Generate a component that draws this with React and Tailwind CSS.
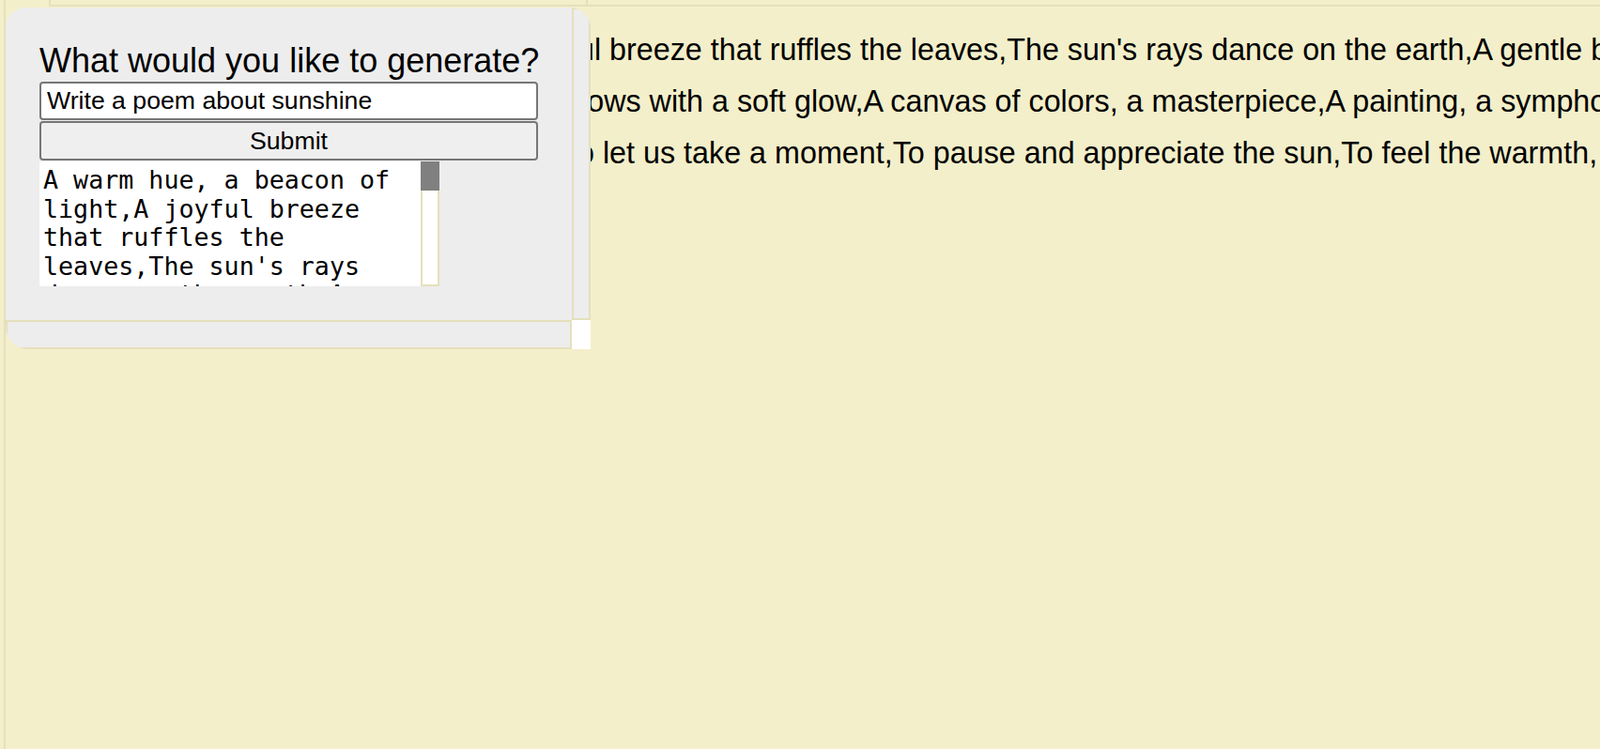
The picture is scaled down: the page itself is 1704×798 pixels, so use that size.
import React from 'react';

const poem =
  "A warm hue, a beacon of light,A joyful breeze that ruffles the leaves,The sun's rays dance on the earth,A gentle breeze whispers through the trees,The sky glows with a soft glow,A canvas of colors, a masterpiece,A painting, a symphony of light,So let us take a moment,To pause and appreciate the sun,To feel the warmth, to bask in its light.";

// visible tail of each wrapped line of the long poem paragraph
const lines = [
  { text: "ful breeze that ruffles the leaves,The sun's rays dance on the earth,A gentle breeze whispers through the trees,", shift: '-ml-[23px]' },
  { text: 'lows with a soft glow,A canvas of colors, a masterpiece,A painting, a symphony of light,', shift: '-ml-[11px]' },
  { text: 'o let us take a moment,To pause and appreciate the sun,To feel the warmth, to bask in its light.', shift: '-ml-[14px]' },
];

function Panel() {
  return (
    <div className="mt-[1px] w-[623px] h-[364px] shrink-0 grid grid-cols-[1fr_20px] grid-rows-[1fr_31px] bg-[#ededed] rounded-tl-[22px] rounded-tr-[22px] rounded-bl-[24px] overflow-hidden">
      <div className="overflow-hidden pt-[37px] pl-[36px]">
        <div className="w-[531px]">
          <h2 className="h-[40px] mb-[2px] text-[36px] leading-[40px] whitespace-nowrap">What would you like to generate?</h2>
          <input
            readOnly
            value="Write a poem about sunshine"
            className="block w-full h-[41px] px-[6px] bg-white border-2 border-[#767676] rounded-[4px] text-[26.67px] font-['Liberation_Sans',Arial,sans-serif] outline-none"
          />
          <button className="block w-full h-[42px] mt-[1px] bg-[#efefef] border-2 border-[#767676] rounded-[4px] text-[26.67px] leading-none font-['Liberation_Sans',Arial,sans-serif]">
            Submit
          </button>
          <div className="mt-[1px] w-[426px] h-[133px] flex">
            <div className="w-[406px] bg-white pl-[4px] pt-[5px] overflow-hidden font-['DejaVu_Sans_Mono',monospace] text-[26.67px] leading-[30.5px]">
              {poem}
            </div>
            <div className="w-[20px] flex flex-col">
              <div className="h-[31px] bg-[#808080]" />
              <div className="flex-1 bg-white border-2 border-t-0 border-[#e5e0bc]" />
            </div>
          </div>
        </div>
      </div>
      <div className="border-2 border-[#e5e0bc]" />
      <div className="border-2 border-[#e5e0bc]" />
      <div className="bg-white" />
    </div>
  );
}

export default function App() {
  return (
    <div className="h-screen bg-[#f3efca] pl-[4px] overflow-hidden font-['Liberation_Sans',Arial,sans-serif] text-black">
      <div className="h-full border-l-2 border-[#e5e0bc] flex flex-col">
        {/* top strip */}
        <div className="ml-[46px] h-[7px] shrink-0 flex border-b-2 border-l-2 border-[#e5e0bc]">
          <div className="w-[572px] border-r-2 border-[#e5e0bc]" />
        </div>
        <div className="flex flex-1 min-h-0">
          <Panel />
          <div className="flex-1 min-w-0 overflow-hidden pt-[19px] text-[32.3px]">
            {lines.map((l, i) => (
              <div key={i} className="h-[55px] leading-[55px] whitespace-nowrap overflow-hidden">
                <span className={`inline-block ${l.shift}`}>{l.text}</span>
              </div>
            ))}
          </div>
        </div>
      </div>
    </div>
  );
}
